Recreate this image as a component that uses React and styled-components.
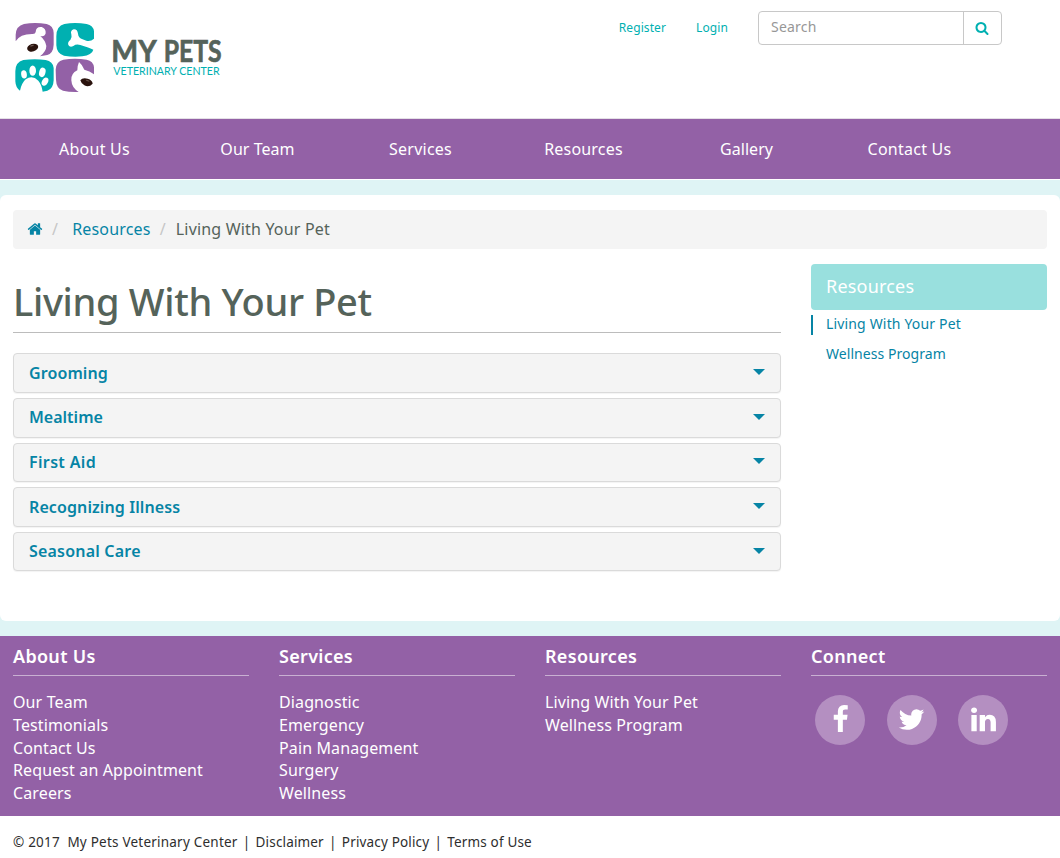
import React from 'react';
import styled, { createGlobalStyle } from 'styled-components';

const purple = '#9361a6';
const teal = '#00b0b1';
const link = '#0684a5';
const slate = '#55635a';
const mist = '#dff4f5';

const GlobalStyle = createGlobalStyle`
  * { box-sizing: border-box; }
  body {
    margin: 0;
    background: #fff;
    font: 16px/22.8px "Noto Sans", "Open Sans", sans-serif;
    color: ${slate};
  }
  a { color: inherit; text-decoration: none; }
  h1, h2, h3, ul, ol { margin: 0; padding: 0; }
  ul, ol { list-style: none; }
`;

const Header = styled.header`
  display: flex;
  justify-content: space-between;
  align-items: flex-start;
  height: 119px;
  padding: 11px 58px 0 10px;
  border-bottom: 1px solid #e4e0e6;
`;

const LogoArt = styled.svg`
  display: block;
  width: 220px;
  height: 80px;
  margin-top: 7px;
  overflow: visible;
`;

const Account = styled.div`
  display: flex;
  align-items: center;
`;

const AccountLink = styled.a`
  margin-right: 30px;
  font-size: 12px;
  letter-spacing: 0.1px;
  color: ${teal};
`;

const SearchBox = styled.form`
  display: flex;
  width: 244px;
  height: 34px;
  border: 1px solid #c8c8c8;
  border-radius: 4px;
`;

const SearchInput = styled.input`
  flex: 1;
  min-width: 0;
  padding: 0 12px 3px;
  border: 0;
  background: none;
  font: 14px "Noto Sans", sans-serif;
  letter-spacing: 0.2px;
  &::placeholder { color: #979797; opacity: 1; }
`;

const SearchButton = styled.button`
  display: flex;
  align-items: center;
  justify-content: center;
  width: 38px;
  padding: 0 1px 1px 0;
  border: 0;
  border-left: 1px solid #c8c8c8;
  background: none;
  color: ${teal};
`;

const Nav = styled.nav`
  display: grid;
  grid-template-columns: repeat(6, 163px);
  height: 60px;
  padding-left: 13px;
  background: ${purple};
  color: #fff;
`;

const NavLink = styled.a`
  display: flex;
  align-items: center;
  justify-content: center;
  letter-spacing: ${p => p.$tracking}px;
`;

const Backdrop = styled.div`
  margin-top: 1px;
  padding: 15px 0;
  background: ${mist};
`;

const Page = styled.main`
  height: 426px;
  padding: 15px 13px 0;
  border-radius: 6px;
  background: #fff;
`;

const Breadcrumb = styled.ol`
  display: flex;
  align-items: center;
  height: 39px;
  padding: 0 14px 1px;
  border-radius: 4px;
  background: #f4f4f4;
  letter-spacing: 0.18px;
`;

const Crumb = styled.li`
  display: flex;
  align-items: center;
  color: ${p => (p.$current ? slate : link)};
`;

const Slash = styled.li`
  margin: 0 ${p => p.$after}px 0 9px;
  color: #c6c6c6;
`;

const Columns = styled.div`
  display: grid;
  grid-template-columns: 768px 236px;
  gap: 30px;
  padding-top: 15px;
`;

const Title = styled.h1`
  height: 69px;
  padding-top: 12px;
  border-bottom: 1px solid #bcbcbc;
  font-size: 38px;
  font-weight: 500;
  line-height: 50px;
  letter-spacing: -0.32px;
`;

const Accordion = styled.div`
  display: flex;
  flex-direction: column;
  gap: 5px;
  padding-top: 20.4px;
`;

const Panel = styled.a`
  display: flex;
  align-items: center;
  justify-content: space-between;
  height: 39.6px;
  padding: 0 15px;
  border: 1px solid #dadada;
  border-radius: 4px;
  background: #f4f4f4;
  box-shadow: 0 1px 1px rgba(0, 0, 0, 0.05);
  color: ${link};
  font-weight: 600;
  letter-spacing: ${p => p.$tracking}px;
`;

const Caret = styled.span`
  border-top: 6px solid ${link};
  border-left: 6px solid transparent;
  border-right: 6px solid transparent;
  margin-bottom: 2px;
`;

const SideTitle = styled.h2`
  height: 46px;
  padding: 0 15px;
  border-radius: 4px;
  background: #99e0de;
  color: #fff;
  font-size: 18px;
  font-weight: 400;
  line-height: 44px;
  letter-spacing: 0.2px;
`;

const SideLink = styled.a`
  display: block;
  height: 20px;
  margin: 5px 0 10px;
  padding-left: 13px;
  border-left: 2px solid ${p => (p.$active ? link : 'transparent')};
  color: ${link};
  font-size: 14px;
  line-height: 18px;
  letter-spacing: ${p => (p.$active ? 0.16 : 0.06)}px;
`;

const Footer = styled.footer`
  display: grid;
  grid-template-columns: repeat(4, 236px);
  gap: 30px;
  height: 180px;
  padding: 0 13px;
  background: ${purple};
  color: #fff;
`;

const FooterTitle = styled.h3`
  height: 40px;
  margin-bottom: 15px;
  border-bottom: 1px solid #c9b0d2;
  font-size: 18px;
  font-weight: 600;
  line-height: 40px;
  letter-spacing: 0.3px;
`;

const FooterLink = styled.li`
  letter-spacing: 0.12px;
`;

const Social = styled.div`
  display: flex;
  gap: 21.7px;
  padding: 0 0 0 4px;
  margin-top: 19px;
`;

const SocialLink = styled.a`
  display: flex;
  align-items: center;
  justify-content: center;
  width: 50px;
  height: 50px;
  padding-bottom: 1px;
  border-radius: 50%;
  background: #b48fc1;
`;

const Legal = styled.div`
  display: flex;
  padding: 15px 13px 0;
  color: #2e2e2e;
  font-size: 13.5px;
  letter-spacing: 0.16px;
  white-space: pre;
`;

const Owner = styled.span`
  letter-spacing: 0.22px;
`;

const Divider = styled.span`
  width: 18px;
  text-align: center;
`;

const icons = {
  home: 'M1472 992v480q0 26-19 45t-45 19h-384v-384h-256v384h-384q-26 0-45-19t-19-45v-480q0-1 .5-3t.5-3l575-474 575 474q1 2 1 6zm223-69l-62 74q-8 9-21 11h-3q-13 0-21-7l-692-577-692 577q-12 8-24 7-13-2-21-11l-62-74q-8-10-7-23.5t11-21.5l719-599q32-26 76-26t76 26l244 204v-195q0-14 9-23t23-9h192q14 0 23 9t9 23v408l219 182q10 8 11 21.5t-7 23.5z',
  search: 'M1216 832q0-185-131.5-316.5t-316.5-131.5-316.5 131.5-131.5 316.5 131.5 316.5 316.5 131.5 316.5-131.5 131.5-316.5zm512 832q0 52-38 90t-90 38q-54 0-90-38l-343-342q-179 124-399 124-143 0-273.5-55.5t-225-150-150-225-55.5-273.5 55.5-273.5 150-225 225-150 273.5-55.5 273.5 55.5 225 150 150 225 55.5 273.5q0 220-124 399l343 343q37 37 37 90z',
  facebook: 'M1343 12v264h-157q-86 0-116 36t-30 108v189h293l-39 296h-254v759h-306v-759h-255v-296h255v-218q0-186 104-288.5t277-102.5q147 0 228 12z',
  twitter: 'M1684 408q-67 98-162 167 1 14 1 42 0 130-38 259.5t-115.5 248.5-184.5 210.5-258 146-323 54.5q-271 0-496-145 35 4 78 4 225 0 401-138-105-2-188-64.5t-114-159.5q33 5 61 5 43 0 85-11-112-23-185.5-111.5t-73.5-205.5v-4q68 38 146 41-66-44-105-115t-39-154q0-88 44-163 121 149 294.5 238.5t371.5 99.5q-8-38-8-74 0-134 94.5-228.5t228.5-94.5q140 0 236 102 109-21 205-78-37 115-142 178 93-10 186-50z',
  linkedin: 'M477 625v991h-330v-991h330zm21-306q1 73-50.5 122t-135.5 49h-2q-82 0-132-49t-50-122q0-74 51.5-122.5t134.5-48.5 133 48.5 51 122.5zm1166 729v568h-329v-530q0-105-40.5-164.5t-126.5-59.5q-63 0-105.5 34.5t-63.5 85.5q-11 30-11 81v553h-329q2-399 2-647t-1-296l-1-48h329v144h-2q20-32 41-56t56.5-52 87-43.5 114.5-15.5q171 0 275 113.5t104 332.5z',
};

function Icon({ name, size }) {
  return (
    <svg width={size} height={size} viewBox="0 0 1792 1792" fill="currentColor">
      <path d={icons[name]} />
    </svg>
  );
}

function Logo() {
  return (
    <LogoArt viewBox="0 0 660 240">
      <path fill={purple} d="M17 70V50Q18 24 42 18Q75 12 110 18Q130 23 131 45V80Q130 105 112 111L90 115Q109 100 109 84Q106 67 91 54Q104 57 107 46Q108 31 95 27Q78 25 77 42Q76 49 66 48Q30 48 17 70Z" />
      <ellipse cx="68" cy="89" rx="17" ry="11.5" fill="#2a130d" transform="rotate(-17 68 89)" />
      <ellipse cx="66" cy="83" rx="6" ry="2" fill="#6d5a52" transform="rotate(-17 66 83)" />
      <path fill={teal} d="M139 55Q139 24 163 18Q195 12 230 18Q250 22 252 40V62Q242 71 229 68L214 62Q205 58 204 47Q202 33 191 34Q180 38 184 49Q187 59 181 66Q172 72 175 81Q180 90 190 84Q199 77 211 81L232 88Q239 91 250 95Q246 111 217 115Q190 118 162 113Q140 107 139 82Z" />
      <path fill={teal} d="M16 160Q16 132 40 126Q75 121 107 126Q129 130 131 150V187Q130 213 112 218L98 221Q95 200 85 188Q67 170 47 184Q35 195 30 218Q17 210 16 190Z" />
      <g fill="#fff">
        <ellipse cx="42" cy="169" rx="8.5" ry="12.5" transform="rotate(-8 42 169)" />
        <ellipse cx="68" cy="158" rx="10" ry="15.5" />
        <ellipse cx="97" cy="163" rx="9.5" ry="14.5" transform="rotate(14 97 163)" />
        <ellipse cx="105" cy="191" rx="9" ry="13" transform="rotate(28 105 191)" />
      </g>
      <path fill={purple} d="M137 155Q138 130 160 125Q195 119 230 125Q250 129 252 148V169Q239 159 223 155Q217 140 207 132Q202 143 202 157Q182 167 184 187Q185 209 206 222Q178 223 159 218Q139 212 138 185Z" />
      <path fill="#2a130d" d="M211 187Q217 178 233 182Q247 186 248 197Q237 209 223 202Q214 198 211 187Z" />
      <ellipse cx="233" cy="188" rx="6" ry="1.6" fill="#6d5a52" transform="rotate(18 233 188)" />
      <g fill={slate} stroke={slate} strokeWidth="2" fontFamily="Lato, sans-serif" fontWeight="700" fontSize="90">
        <text x="304" y="133" textLength="136" lengthAdjust="spacingAndGlyphs">MY</text>
        <text x="461" y="133" textLength="174" lengthAdjust="spacingAndGlyphs">PETS</text>
      </g>
      <text x="310" y="172" textLength="319" lengthAdjust="spacingAndGlyphs" fontFamily="Lato, sans-serif" fontSize="35" fill={teal}>VETERINARY CENTER</text>
    </LogoArt>
  );
}

const navItems = [['About Us', 0.25], ['Our Team', 0.05], ['Services', 0.25], ['Resources', 0.2], ['Gallery', 0.05], ['Contact Us', 0.25]];
const panels = [['Grooming', 0.1], ['Mealtime', 0], ['First Aid', 0.35], ['Recognizing Illness', 0.1], ['Seasonal Care', 0.2]];
const footerColumns = [
  ['About Us', ['Our Team', 'Testimonials', 'Contact Us', 'Request an Appointment', 'Careers']],
  ['Services', ['Diagnostic', 'Emergency', 'Pain Management', 'Surgery', 'Wellness']],
  ['Resources', ['Living With Your Pet', 'Wellness Program']],
];

export default function App() {
  return (
    <>
      <GlobalStyle />
      <Header>
        <Logo />
        <Account>
          <AccountLink href="#">Register</AccountLink>
          <AccountLink href="#">Login</AccountLink>
          <SearchBox>
            <SearchInput placeholder="Search" />
            <SearchButton type="button" aria-label="Search"><Icon name="search" size={14} /></SearchButton>
          </SearchBox>
        </Account>
      </Header>
      <Nav>
        {navItems.map(([label, tracking]) => <NavLink key={label} href="#" $tracking={tracking}>{label}</NavLink>)}
      </Nav>
      <Backdrop>
        <Page>
          <Breadcrumb>
            <Crumb><Icon name="home" size={16} /></Crumb>
            <Slash $after={14}>/</Slash>
            <Crumb>Resources</Crumb>
            <Slash $after={10}>/</Slash>
            <Crumb $current>Living With Your Pet</Crumb>
          </Breadcrumb>
          <Columns>
            <section>
              <Title>Living With Your Pet</Title>
              <Accordion>
                {panels.map(([label, tracking]) => (
                  <Panel key={label} href="#" $tracking={tracking}>{label}<Caret /></Panel>
                ))}
              </Accordion>
            </section>
            <aside>
              <SideTitle>Resources</SideTitle>
              <SideLink href="#" $active>Living With Your Pet</SideLink>
              <SideLink href="#">Wellness Program</SideLink>
            </aside>
          </Columns>
        </Page>
      </Backdrop>
      <Footer>
        {footerColumns.map(([title, links]) => (
          <section key={title}>
            <FooterTitle>{title}</FooterTitle>
            <ul>{links.map(l => <FooterLink key={l}><a href="#">{l}</a></FooterLink>)}</ul>
          </section>
        ))}
        <section>
          <FooterTitle>Connect</FooterTitle>
          <Social>
            {['facebook', 'twitter', 'linkedin'].map(n => (
              <SocialLink key={n} href="#" aria-label={n}><Icon name={n} size={29} /></SocialLink>
            ))}
          </Social>
        </section>
      </Footer>
      <Legal>
        <Owner>{'© 2017  My Pets Veterinary Center'}</Owner>
        <Divider>|</Divider>
        <a href="#">Disclaimer</a>
        <Divider>|</Divider>
        <a href="#">Privacy Policy</a>
        <Divider>|</Divider>
        <a href="#">Terms of Use</a>
      </Legal>
    </>
  );
}
